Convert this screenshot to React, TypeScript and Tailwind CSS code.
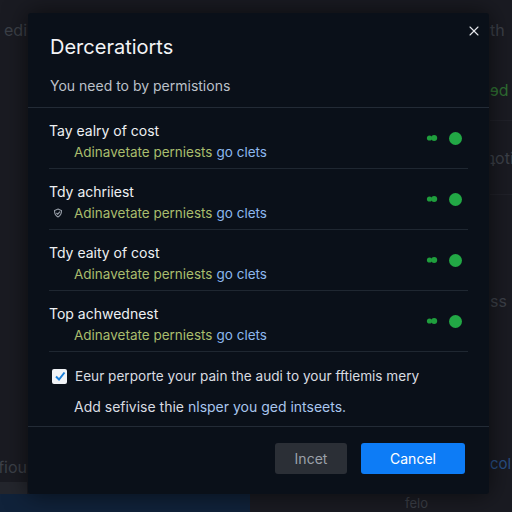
import { X } from "lucide-react";

type Row = { title: string; icon?: boolean };

const rows: Row[] = [
  { title: "Tay ealry of cost" },
  { title: "Tdy achriiest", icon: true },
  { title: "Tdy eaity of cost" },
  { title: "Top achwednest" },
];

function Toggle() {
  return (
    <div className="flex items-center gap-[11px]">
      <svg width="12" height="8" viewBox="0 0 12 8">
        <circle cx="3.5" cy="4" r="2.6" fill="#1f9e3d" />
        <circle cx="8.2" cy="4" r="3" fill="#1f9e3d" />
      </svg>
      <div className="w-[13px] h-[13px] rounded-full bg-[#22a845]" />
    </div>
  );
}

function PermissionRow({ row }: { row: Row }) {
  return (
    <div className="flex items-center justify-between h-[61px] pr-[6px] border-b border-[#1f2731]">
      <div className="flex flex-col gap-[3px] pt-[6px]">
        <span className="text-[14px] text-[#eef0f3] leading-[18px]">{row.title}</span>
        <div className="flex items-center text-[13.5px] leading-[18px]">
          <span className="w-[25px] flex justify-start pl-[4px]">
            {row.icon && (
              <svg width="10" height="10" viewBox="0 0 10 10" fill="none" stroke="#9aa1ab" strokeWidth="1.1">
                <path d="M5 1 L8.5 2.5 C8.5 6 7 8 5 9 C3 8 1.5 6 1.5 2.5 Z" />
                <path d="M3.4 5 L4.7 6.2 L7 3.6" />
              </svg>
            )}
          </span>
          <span className="text-[#a9bd6d]">Adinavetate perniests</span>
          <span className="text-[#8cb8ee] ml-[4px]">go clets</span>
        </div>
      </div>
      <Toggle />
    </div>
  );
}

export default function App() {
  return (
    <div className="relative w-[512px] h-[512px] overflow-hidden bg-[#1a1b22] font-['Inter',sans-serif]">
      {/* background page */}
      <div className="flex flex-col h-full">
        <div className="flex justify-between h-[494px] shrink-0">
          <div className="w-[27px] flex flex-col text-[#3c4048] text-[16px]">
            <div className="h-[60px] shrink-0 flex items-center justify-end">
              <span className="whitespace-nowrap">edi</span>
            </div>
            <div className="h-[392px] shrink-0" />
            <div className="h-[30px] shrink-0 flex items-center justify-end">
              <span className="whitespace-nowrap">fiou</span>
            </div>
            <div className="flex-1 bg-[#24262d]" />
          </div>
          <div className="w-[24px] flex flex-col text-[#3c4048] text-[16px] pl-[2px]">
            <div className="h-[60px] shrink-0 flex items-center">th</div>
            <div className="h-[60px] shrink-0 flex items-center text-[#2f6e32]">ɘd</div>
            <div className="h-[74px] shrink-0 flex items-center border-t border-[#202129]">ʇoti</div>
            <div className="h-[212px] shrink-0 flex items-center border-t border-[#202129]">ss</div>
            <div className="flex-1 flex items-end pb-[19px] text-[#284f85] text-[15px]">col</div>
          </div>
        </div>
        <div className="flex-1 flex items-center">
          <div className="w-[250px] h-full bg-[#10223a]" />
          <span className="ml-[155px] text-[13px] text-[#3a3e46]">felo</span>
        </div>
      </div>

      {/* modal */}
      <div className="absolute left-[28px] top-[13px] w-[461px] h-[481px] bg-[#0a1019] rounded-[3px] shadow-[0_0_24px_rgba(0,0,0,0.6)] flex flex-col">
        <button className="absolute right-[7px] top-[10px] text-[#e6e8ec]">
          <X size={16} strokeWidth={1.6} />
        </button>
        <div className="px-[22px] pt-[21px] h-[95px] border-b border-[#232b36]">
          <h2 className="text-[20px] text-[#f3f4f6] leading-[26px]">Derceratiorts</h2>
          <p className="text-[14px] text-[#bcc1c9] mt-[15px]">You need to by permistions</p>
        </div>
        <div className="px-[21px]">
          {rows.map((r, i) => (
            <PermissionRow key={i} row={r} />
          ))}
        </div>
        <div className="px-[24px] pt-[14px] h-[75px] border-b border-[#232b36]">
          <div className="flex items-center gap-[8px]">
            <div className="w-[15px] h-[15px] bg-[#f1f3f6] rounded-[2px] flex items-center justify-center">
              <svg width="12" height="12" viewBox="0 0 12 12" fill="none" stroke="#1a7fd9" strokeWidth="2">
                <path d="M2 6.5 L5 9.5 L10.5 2.5" />
              </svg>
            </div>
            <span className="text-[13.6px] text-[#d9dce1]">Eeur perporte your pain the audi to your fftiemis mery</span>
          </div>
          <p className="text-[14px] pl-[22px] mt-[10px]">
            <span className="text-[#d9dce1]">Add sefivise thie </span>
            <span className="text-[#a9c6ee]">nlsper you ged intseets.</span>
          </p>
        </div>
        <div className="flex justify-end gap-[14px] pr-[24px] pt-[16px]">
          <button className="w-[72px] h-[31px] rounded-[3px] bg-[#2b2f36] text-[#9ba1aa] text-[14px]">Incet</button>
          <button className="w-[104px] h-[31px] rounded-[3px] bg-[#0d7cf6] text-white text-[14px]">Cancel</button>
        </div>
      </div>
    </div>
  );
}
